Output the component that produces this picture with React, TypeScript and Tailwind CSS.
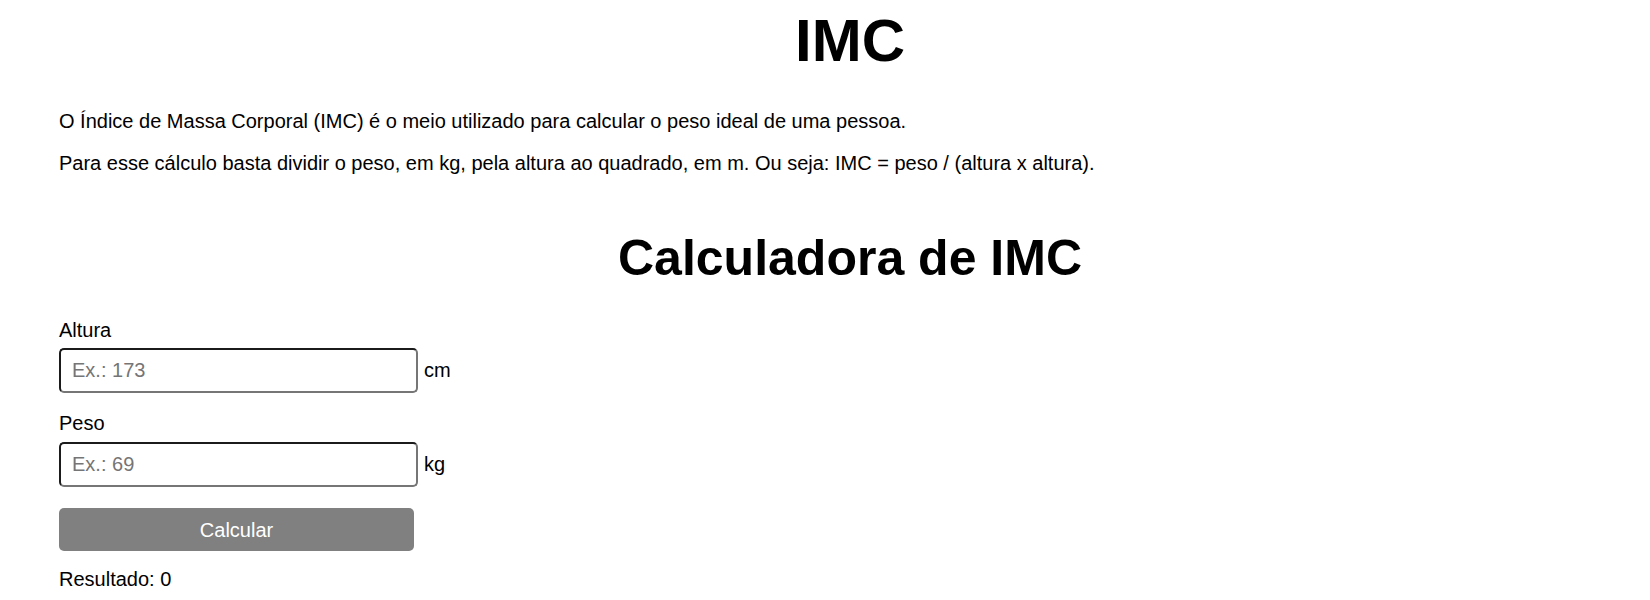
import * as React from "react";

function Field({
  id,
  label,
  placeholder,
  unit,
  labelGap,
  inputGap,
}: {
  id: string;
  label: string;
  placeholder: string;
  unit: string;
  labelGap: string;
  inputGap: string;
}) {
  return (
    <div>
      <label htmlFor={id} className={`block text-[20px] leading-[23px] ${labelGap}`}>
        {label}
      </label>
      <div className={`flex items-center ${inputGap}`}>
        <input
          id={id}
          type="text"
          placeholder={placeholder}
          className="h-[45px] w-[359px] rounded-[5px] border-2 border-t-[#1b1b1b] border-l-[#1b1b1b] border-r-[#767676] border-b-[#767676] bg-white px-[11px] text-[20px] text-black outline-none placeholder:text-[#757575]"
        />
        <span className="ml-[6px] text-[20px] leading-[23px]">{unit}</span>
      </div>
    </div>
  );
}

export default function App() {
  const [resultado] = React.useState(0);

  return (
    <div className="min-h-[600px] bg-white pl-[59px] pr-[9px] font-['Liberation_Sans',Arial,sans-serif] text-black">
      <h1 className="pt-[7px] text-center text-[60px] font-bold leading-[68px]">IMC</h1>

      <p className="mt-[35px] text-[20px] leading-[23px]">
        O Índice de Massa Corporal (IMC) é o meio utilizado para calcular o peso ideal de uma pessoa.
      </p>
      <p className="mt-[19px] text-[20px] leading-[23px]">
        Para esse cálculo basta dividir o peso, em kg, pela altura ao quadrado, em m. Ou seja: IMC = peso / (altura x altura).
      </p>

      <h2 className="mt-[54px] text-center text-[50px] font-bold leading-[58px]">Calculadora de IMC</h2>

      <form onSubmit={(e) => e.preventDefault()}>
        <Field
          id="altura"
          label="Altura"
          placeholder="Ex.: 173"
          unit="cm"
          labelGap="mt-[32px]"
          inputGap="mt-[6px]"
        />
        <Field
          id="peso"
          label="Peso"
          placeholder="Ex.: 69"
          unit="kg"
          labelGap="mt-[19px]"
          inputGap="mt-[7px]"
        />
        <button
          type="submit"
          className="mt-[21px] block h-[43px] w-[355px] rounded-[5px] bg-[#808080] text-[20px] text-white"
        >
          Calcular
        </button>
      </form>

      <p className="mt-[17px] text-[20px] leading-[23px]">Resultado: {resultado}</p>
    </div>
  );
}
